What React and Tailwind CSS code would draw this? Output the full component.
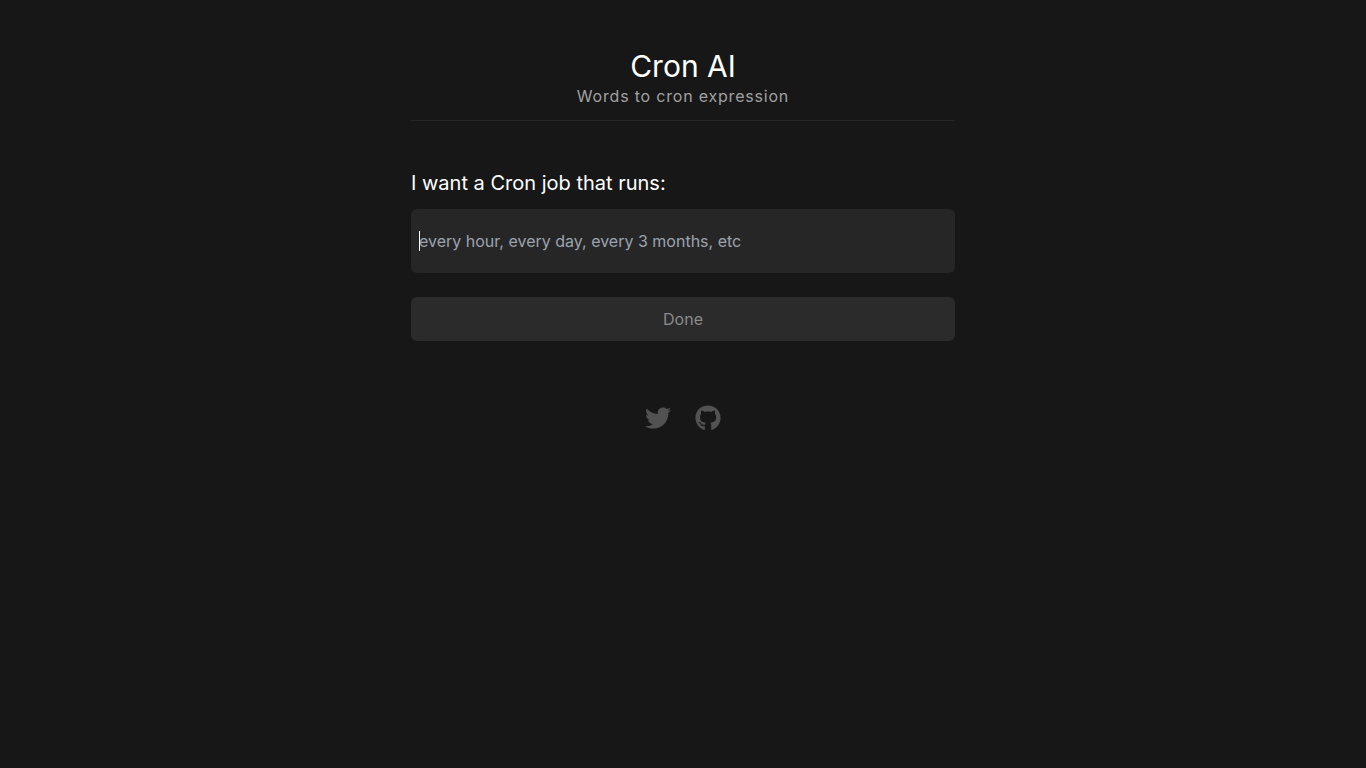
import { useState } from "react";
import { FaTwitter, FaGithub } from "react-icons/fa";

export default function App() {
  const [schedule, setSchedule] = useState("");

  return (
    <div className="min-h-screen bg-neutral-900 px-4 pt-12 font-['Inter',sans-serif] text-white">
      <main className="mx-auto flex max-w-[544px] flex-col">
        <header className="border-b border-neutral-800 pb-3 text-center">
          <h1 className="text-3xl">Cron AI</h1>
          <p className="tracking-wider text-neutral-400">Words to cron expression</p>
        </header>
        <form className="mt-12 flex flex-col" onSubmit={(e) => e.preventDefault()}>
          <label htmlFor="schedule" className="text-xl">
            I want a Cron job that runs:
          </label>
          <div className="relative mt-3 flex">
            <input
              id="schedule"
              type="text"
              autoFocus
              value={schedule}
              onChange={(e) => setSchedule(e.target.value)}
              placeholder="every hour, every day, every 3 months, etc"
              className="h-16 w-full rounded-md bg-neutral-800 px-2 text-white outline-none placeholder:text-[#9ca3af]"
            />
            {schedule === "" && (
              <span
                aria-hidden="true"
                className="pointer-events-none absolute inset-y-0 left-2 my-auto h-5 w-px bg-white"
              />
            )}
          </div>
          <button
            type="submit"
            disabled={schedule === ""}
            className="mt-6 h-11 rounded-md bg-[#2b2b2b] text-[#8a8a8a]"
          >
            Done
          </button>
        </form>
        <footer className="mt-16 flex justify-center gap-6 text-neutral-600">
          <a href="https://twitter.com" aria-label="Twitter">
            <FaTwitter size={26} />
          </a>
          <a href="https://github.com" aria-label="GitHub">
            <FaGithub size={26} />
          </a>
        </footer>
      </main>
    </div>
  );
}
